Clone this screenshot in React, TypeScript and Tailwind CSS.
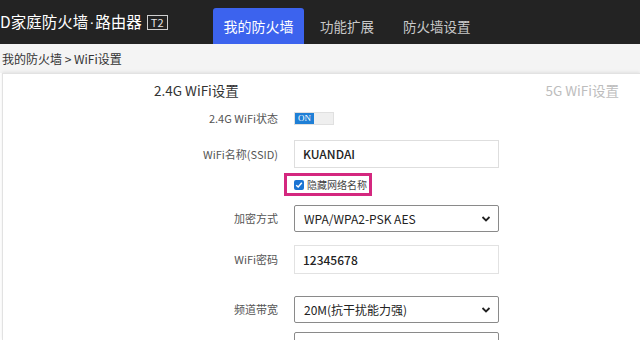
import React from "react";

const font = { fontFamily: '"Noto Sans CJK SC", "Open Sans", sans-serif' };

function Chevron() {
  return (
    <svg width="10" height="7" viewBox="0 0 10 7" className="absolute right-[7px] top-1/2 -translate-y-1/2">
      <path d="M1.5 1.5 L5 5 L8.5 1.5" fill="none" stroke="#222" strokeWidth="1.8" />
    </svg>
  );
}

function Row({ label, children, className }: { label: string; children: React.ReactNode; className?: string }) {
  return (
    <div className={"flex items-center " + (className ?? "")}>
      <div className="w-[275px] shrink-0 text-right text-[11px] text-[#555] leading-none whitespace-nowrap">{label}</div>
      <div className="ml-[16px]">{children}</div>
    </div>
  );
}

export default function App() {
  return (
    <div className="w-[640px] h-[340px] overflow-hidden bg-white" style={font}>
      <div className="h-[44px] bg-[#232323] flex items-end">
        <div className="w-[213px] shrink-0 h-full flex items-center text-white text-[15.5px] leading-none whitespace-nowrap">
          <span>D家庭防火墙</span>
          <span className="px-[1px]" style={{ fontFamily: '"Liberation Sans", sans-serif' }}>·</span>
          <span>路由器</span>
          <span className="ml-[5px] border border-[#cfcfcf] text-[11px] leading-none px-[3px] py-[1px] text-[#e5e5e5]">T2</span>
        </div>
        <div className="flex items-end h-full">
          <div className="w-[91px] h-[36px] bg-[#3c63ee] rounded-t-[3px] text-white text-[14px] flex items-center justify-center">我的防火墙</div>
          <div className="h-[36px] flex items-center ml-[16px] text-[13.5px] text-[#c8c8c8]">功能扩展</div>
          <div className="h-[36px] flex items-center ml-[29px] text-[13.5px] text-[#c8c8c8]">防火墙设置</div>
        </div>
      </div>
      <div className="h-[29px] bg-[#f4f4f4] flex items-center pl-[2px] text-[12px] text-[#333]">我的防火墙 &gt; WiFi设置</div>
      <div className="ml-[2px] h-[267px] bg-white border-l border-t border-[#e2e2e2] shadow-[0_-1px_3px_rgba(0,0,0,0.08)] relative">
        <div className="flex items-center pt-[6px] h-[26px]">
          <div className="ml-[151px] text-[13.5px] text-[#333] leading-[20px]">2.4G WiFi设置</div>
          <div className="ml-auto mr-[21px] text-[13.5px] text-[#bdbdbd] leading-[20px]">5G WiFi设置</div>
        </div>
        <Row label="2.4G WiFi状态" className="mt-[11px] h-[14px]">
          <div className="flex w-[40px] h-[13px] border border-[#e0e0e0]">
            <div className="w-[19px] h-full bg-[#1f7fd6] text-white text-[9px] leading-[11px] text-center" style={{ fontFamily: '"Liberation Serif", serif' }}>ON</div>
            <div className="flex-1 bg-[#efefef]"></div>
          </div>
        </Row>
        <Row label="WiFi名称(SSID)" className="mt-[15px]">
          <div className="w-[205px] h-[28px] border border-[#dedede] flex items-center pl-[8px] text-[12px] text-[#222] font-medium">KUANDAI</div>
        </Row>
        <div className="mt-[5px] ml-[281px] w-[88px] h-[23px] border-[3px] border-[#d4287f] flex items-center pl-[7px] whitespace-nowrap">
          <span className="w-[10px] h-[10px] shrink-0 bg-[#1b74d3] rounded-[2px] flex items-center justify-center">
            <svg width="8" height="8" viewBox="0 0 8 8"><path d="M1.2 4.2 L3.2 6 L6.8 1.8" fill="none" stroke="#fff" strokeWidth="1.5" /></svg>
          </span>
          <span className="ml-[3px] text-[10px] text-[#444] leading-none">隐藏网络名称</span>
        </div>
        <Row label="加密方式" className="mt-[9px]">
          <div className="relative w-[205px] h-[27px] border border-[#8a8a8a] rounded-[2px] flex items-center pl-[9px] text-[12px] text-[#222]">
            WPA/WPA2-PSK AES
            <Chevron />
          </div>
        </Row>
        <Row label="WiFi密码" className="mt-[13px]">
          <div className="w-[205px] h-[29px] border border-[#e2e2e2] flex items-center pl-[8px] text-[12px] text-[#222] font-medium">12345678</div>
        </Row>
        <Row label="频道带宽" className="mt-[22px]">
          <div className="relative w-[205px] h-[27px] border border-[#8a8a8a] rounded-[2px] flex items-center pl-[9px] text-[12px] text-[#222]">
            20M(抗干扰能力强)
            <Chevron />
          </div>
        </Row>
        <Row label="" className="mt-[9px]">
          <div className="w-[205px] h-[27px] border border-[#8a8a8a] rounded-[2px]"></div>
        </Row>
      </div>
    </div>
  );
}
